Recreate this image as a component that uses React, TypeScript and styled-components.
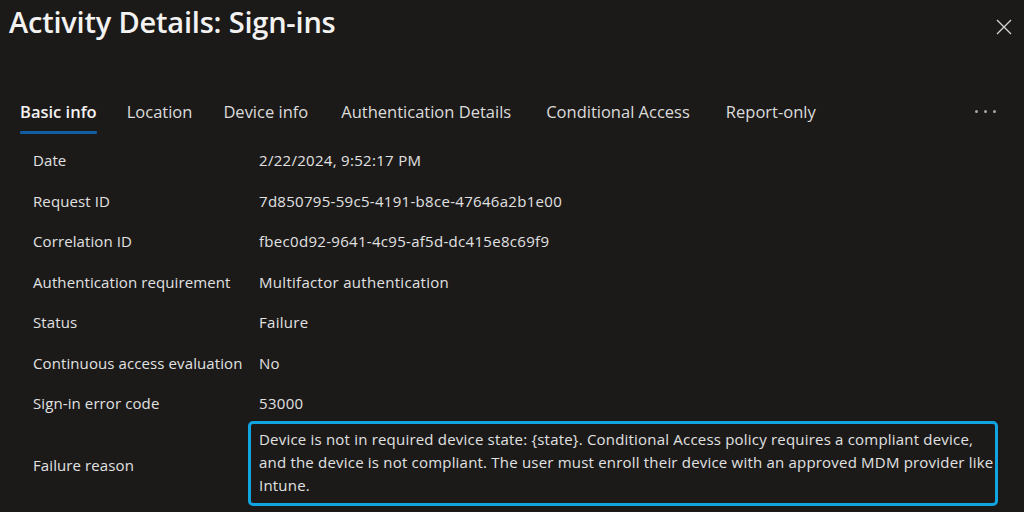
import styled, { createGlobalStyle } from 'styled-components';

const GlobalStyle = createGlobalStyle`
  html, body {
    margin: 0;
    padding: 0;
    background: #1b1a19;
  }
  body {
    font-family: 'Open Sans', 'Noto Sans', sans-serif;
    color: #e6e6e6;
  }
`;

const Panel = styled.div`
  width: 1024px;
  height: 512px;
  overflow: hidden;
  background: #1b1a19;
  display: flex;
  flex-direction: column;
`;

const Header = styled.div`
  display: flex;
  justify-content: space-between;
  align-items: flex-start;
  padding: 2px 12px 0 9px;
  height: 85px;
  box-sizing: border-box;
`;

const Title = styled.h1`
  margin: 0;
  font-size: 29px;
  font-weight: 600;
  color: #f3f2f1;
  letter-spacing: -0.2px;
  line-height: 40px;
`;

const CloseButton = styled.button`
  background: none;
  border: none;
  padding: 0;
  margin-top: 17px;
  width: 16px;
  height: 16px;
  cursor: pointer;
  display: flex;
`;

const Tabs = styled.div`
  display: flex;
  align-items: flex-start;
  padding: 0 28px 0 20px;
  height: 55px;
  box-sizing: border-box;
`;

const Tab = styled.div<{ $active?: boolean; $gap: number }>`
  position: relative;
  font-size: 16.5px;
  line-height: 24px;
  padding-top: 15px;
  margin-right: ${(p) => p.$gap}px;
  font-weight: ${(p) => (p.$active ? 600 : 400)};
  color: ${(p) => (p.$active ? '#f3f2f1' : '#dcdcdc')};
  white-space: nowrap;
  &::after {
    content: '';
    display: ${(p) => (p.$active ? 'block' : 'none')};
    position: absolute;
    left: 0;
    right: 0;
    top: 46px;
    height: 3px;
    border-radius: 1px;
    background: #115ea3;
  }
`;

const More = styled.div`
  margin-left: auto;
  padding-top: 25px;
  display: flex;
  gap: 6px;
`;

const Dot = styled.span`
  width: 3px;
  height: 3px;
  border-radius: 50%;
  background: #a8a8a8;
`;

const Details = styled.div`
  display: grid;
  grid-template-columns: 226px 750px;
  grid-auto-rows: 40.5px;
  padding-left: 33px;
`;

const Label = styled.div`
  font-size: 15px;
  letter-spacing: 0.1px;
  color: #e1e1e1;
  display: flex;
  align-items: center;
  white-space: nowrap;
`;

const Value = styled.div`
  font-size: 15px;
  letter-spacing: 0.3px;
  color: #e1e1e1;
  display: flex;
  align-items: center;
  white-space: nowrap;
`;

const ReasonLabel = styled(Label)`
  margin-top: -3px;
  height: 88px;
`;

const ReasonBox = styled.div`
  margin-top: -3px;
  margin-left: -11px;
  width: 750px;
  height: 85px;
  box-sizing: border-box;
  border: 3px solid #10a4e0;
  border-radius: 5px;
  padding: 4px 8px;
  font-size: 15px;
  letter-spacing: 0.2px;
  line-height: 23px;
  color: #e1e1e1;
`;

const Line = styled.span`
  display: block;
  white-space: nowrap;
`;

const tabs = [
  { name: 'Basic info', gap: 30, active: true },
  { name: 'Location', gap: 31 },
  { name: 'Device info', gap: 33 },
  { name: 'Authentication Details', gap: 35 },
  { name: 'Conditional Access', gap: 36 },
  { name: 'Report-only', gap: 0 },
];

const rows: [string, string][] = [
  ['Date', '2/22/2024, 9:52:17 PM'],
  ['Request ID', '7d850795-59c5-4191-b8ce-47646a2b1e00'],
  ['Correlation ID', 'fbec0d92-9641-4c95-af5d-dc415e8c69f9'],
  ['Authentication requirement', 'Multifactor authentication'],
  ['Status', 'Failure'],
  ['Continuous access evaluation', 'No'],
  ['Sign-in error code', '53000'],
];

const reasonLines = [
  'Device is not in required device state: {state}. Conditional Access policy requires a compliant device,',
  'and the device is not compliant. The user must enroll their device with an approved MDM provider like',
  'Intune.',
];

export default function App() {
  return (
    <Panel>
      <GlobalStyle />
      <Header>
        <Title>Activity Details: Sign-ins</Title>
        <CloseButton aria-label="Close">
          <svg width="16" height="16" viewBox="0 0 16 16">
            <path d="M1 1 L15 15 M15 1 L1 15" stroke="#d6d6d6" strokeWidth="1.3" fill="none" />
          </svg>
        </CloseButton>
      </Header>
      <Tabs>
        {tabs.map((t) => (
          <Tab key={t.name} $active={t.active} $gap={t.gap}>
            {t.name}
          </Tab>
        ))}
        <More>
          <Dot />
          <Dot />
          <Dot />
        </More>
      </Tabs>
      <Details>
        {rows.flatMap(([k, v]) => [
          <Label key={k}>{k}</Label>,
          <Value key={k + '-v'}>{v}</Value>,
        ])}
        <ReasonLabel>Failure reason</ReasonLabel>
        <ReasonBox>
          {reasonLines.map((l) => (
            <Line key={l}>{l}</Line>
          ))}
        </ReasonBox>
      </Details>
    </Panel>
  );
}
